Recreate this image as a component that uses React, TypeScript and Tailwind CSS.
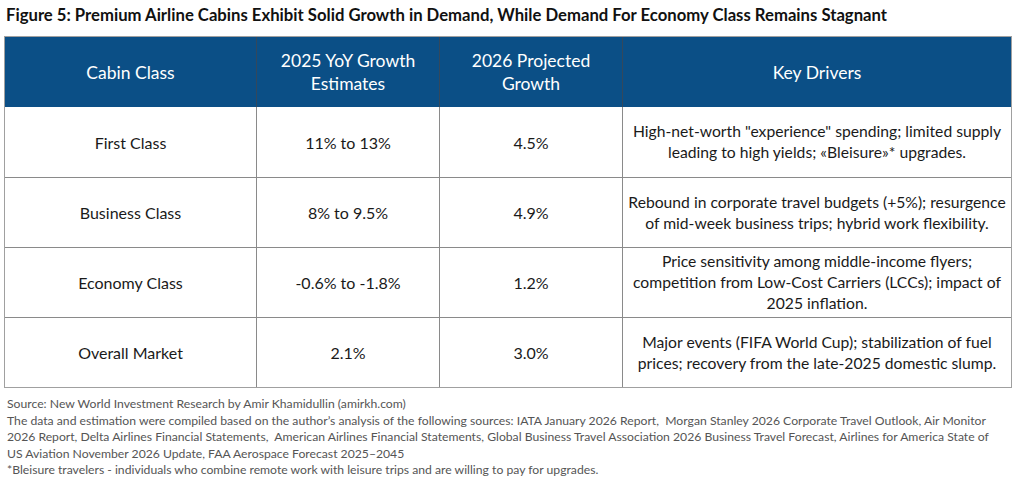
import React from "react";

const rows: [string, string, string, string[]][] = [
  ["First Class", "11% to 13%", "4.5%", ["High-net-worth \"experience\" spending; limited supply", "leading to high yields; «Bleisure»* upgrades."]],
  ["Business Class", "8% to 9.5%", "4.9%", ["Rebound in corporate travel budgets (+5%); resurgence", "of mid-week business trips; hybrid work flexibility."]],
  ["Economy Class", "-0.6% to -1.8%", "1.2%", ["Price sensitivity among middle-income flyers;", "competition from Low-Cost Carriers (LCCs); impact of", "2025 inflation."]],
  ["Overall Market", "2.1%", "3.0%", ["Major events (FIFA World Cup); stabilization of fuel", "prices; recovery from the late-2025 domestic slump."]],
];

export default function App() {
  return (
    <div className="w-[1024px] h-[487px] bg-white overflow-hidden" style={{ fontFamily: "Lato, 'Open Sans', sans-serif" }}>
      <div className="pl-[6px] pt-[5px] h-[36px] text-[16.7px] font-bold text-[#111] leading-[20px] whitespace-nowrap">
        Figure 5: Premium Airline Cabins Exhibit Solid Growth in Demand, While Demand For Economy Class Remains Stagnant
      </div>
      <div className="ml-[4px] w-[1008px] border border-[#a0a0a0]">
        <div className="grid grid-cols-[252px_183px_183px_1fr] h-[70px] bg-[#0b4f86] text-white text-[17.5px] leading-[23px]">
          <div className="flex items-center justify-center text-center border-r border-[#33485c]">Cabin Class</div>
          <div className="flex items-center justify-center text-center border-r border-[#33485c]">2025 YoY Growth<br />Estimates</div>
          <div className="flex items-center justify-center text-center border-r border-[#33485c]">2026 Projected<br />Growth</div>
          <div className="flex items-center justify-center text-center">Key Drivers</div>
        </div>
        {rows.map((r, i) => (
          <div key={i} className={"grid grid-cols-[252px_183px_183px_1fr] h-[70px] text-[#1a1a1a] text-[16px] leading-[21px] " + (i > 0 ? "border-t border-[#8a8a8a]" : "")}>
            <div className="flex items-center justify-center text-center border-r border-[#8a8a8a]">{r[0]}</div>
            <div className="flex items-center justify-center text-center border-r border-[#8a8a8a]">{r[1]}</div>
            <div className="flex items-center justify-center text-center border-r border-[#8a8a8a]">{r[2]}</div>
            <div className="flex flex-col items-center justify-center text-center whitespace-nowrap text-[15.7px]">
              {r[3].map((l, j) => (
                <div key={j}>{l}</div>
              ))}
            </div>
          </div>
        ))}
      </div>
      <div className="mt-[8px] pl-[7px] pr-[8px] text-[12.2px] leading-[16.5px] text-[#555] whitespace-nowrap">
        <div>Source: New World Investment Research by Amir Khamidullin (amirkh.com)</div>
        <div>The data and estimation were compiled based on the author’s analysis of the following sources: IATA January 2026 Report, &nbsp;Morgan Stanley 2026 Corporate Travel Outlook, Air Monitor</div>
        <div>2026 Report, Delta Airlines Financial Statements, &nbsp;American Airlines Financial Statements, Global Business Travel Association 2026 Business Travel Forecast, Airlines for America State of</div>
        <div>US Aviation November 2026 Update, FAA Aerospace Forecast 2025–2045</div>
        <div>*Bleisure travelers - individuals who combine remote work with leisure trips and are willing to pay for upgrades.</div>
      </div>
    </div>
  );
}
